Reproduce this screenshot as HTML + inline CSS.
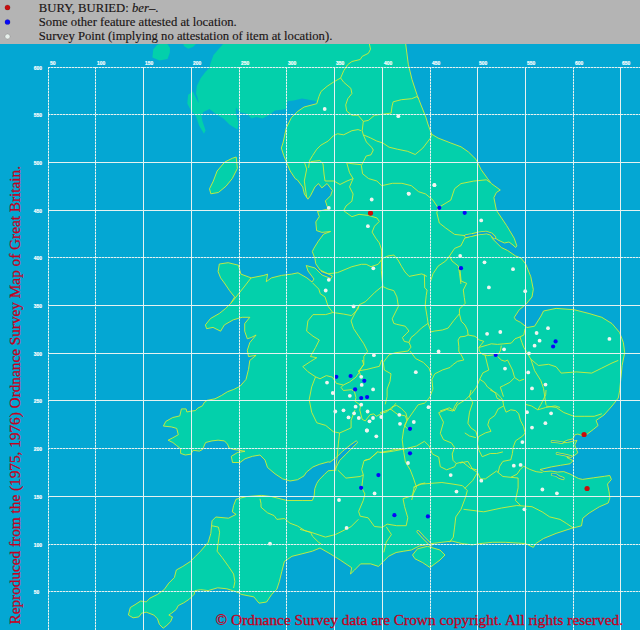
<!DOCTYPE html>
<html><head><meta charset="utf-8">
<style>
html,body{margin:0;padding:0;background:#04a7d3;}
body{width:640px;height:630px;overflow:hidden;position:relative;}
svg{position:absolute;left:0;top:0;display:block;}
.hdr{font-family:"Liberation Serif",serif;}
</style></head><body>
<svg width="640" height="630" viewBox="0 0 640 630">
<rect x="0" y="0" width="640" height="630" fill="#04a7d3"/>
<rect x="0" y="0" width="640" height="44" fill="#b4b4b4"/>
<g fill="#03d0ab">
<polygon points="152.4,57.5 153.2,49.5 157,45 159.5,44 167.5,44 170,48 169.8,52.7 167.5,59 159.5,60.6"/>
<polygon points="183.3,44 196,44 192.9,47.1 188.1,48.7 184.1,46.3"/>
</g>
<g fill="#03d0ab">
<polygon points="223,44 406.9,44 405.7,44 408.3,64.3 412,79.5 417,94.8 421,105 426,117.6 427.9,124 431.7,134.2 438,138 450.8,143 461,146.8 468.5,152 476.1,159.5 481.2,169.7 487.6,178.6 491.4,183.6 500.3,190 496.4,192.5 493.9,197.6 496.4,210.3 506.6,225.5 514.2,238.2 516.8,245.8 515.6,247.5 513,245 509,242 504.4,243 498,240 493,236.5 491.7,238 501.3,247.5 507.6,250.5 515.6,256 521,258 525.7,264 530.8,276.7 533.3,289.4 532,297 525.7,304.6 519.3,309.7 514.3,317.3 515.5,319.8 520.6,322.4 527,327.5 534.6,326.2 541,316 543.5,311 556.1,308.4 574,309.7 589.1,313.5 601.8,317.3 612,323.6 619.6,332.5 623.4,342.7 624.7,352.8 622.1,365.5 620.9,378.2 619.6,390.9 618.3,398 612,406 604,415 596,420.5 598.1,425.5 593.4,429.4 587.2,434.1 582.5,435.6 577.8,434.1 574.7,434.8 573.1,438.8 566.9,440.3 562.2,442.7 567.5,442.5 577,440.3 574.7,445 577.8,452.8 573.9,455.9 566.9,457.5 573.1,460.6 570,463.8 560.6,465.3 551.3,466.9 545,468.4 540,469.5 544.2,471.6 551,471 557.5,472 563.8,471.6 570,474 578.6,478.5 582.5,479.4 593.4,477.8 604.4,476.3 609.8,475.5 611.4,479.4 607.5,484.1 609.1,491.9 609.8,498.1 608.2,503 599.3,506.8 589.1,513.1 582.8,518.2 581.5,525.8 571.4,528.4 556.1,533.4 543.5,538.5 535.8,543.6 533.3,547.4 525.7,543.6 505.4,542.3 492.7,542.3 480,543.6 472.3,544.9 462.1,543.6 452,541.1 441.8,542.3 431.7,543.6 419,546.1 411.4,550 403.8,551.2 396.1,552.5 388.5,556.3 383.5,561.4 378.4,566.4 370.8,563.9 360.6,563.9 354.3,570.3 350.5,574 351.7,567.7 347.9,565.2 340.3,560.1 330.2,553.8 320,548 312.3,551.2 302.1,553.8 292,556.3 284.4,561.4 281.8,571.5 279.3,581.7 276.8,589.3 271.7,594.4 266.6,602 259,603.2 253.9,596.9 241.2,594.4 238.2,592.5 232.6,590.6 226.9,588.8 217.6,587.8 208.2,590.6 200.7,589.7 195,590.6 194.1,594.4 189.4,599.1 183.8,602.8 178.2,605.6 176.3,609.4 171.6,613.2 168.8,615 172.5,616.9 170.7,621.6 166.9,625.3 163.2,628.2 159.4,624.4 157.5,618.8 153.8,615 146.3,612.2 141.6,613.2 138.8,616.9 133.1,617.8 128.4,615 130.3,607.5 135,604.7 140.6,601 146.3,601.9 150,598.1 157.5,594.4 164.1,589.7 168.8,583.1 174.4,577.5 176.3,570 182.8,566.4 190.5,561.4 195.5,556.3 200.6,551.2 208.2,542.3 210.8,533.5 212,520.8 215.8,517 228.5,518.2 236.1,514.4 232.3,511.9 233.6,505.5 236.1,499.2 246.3,496.6 261.5,495.4 271.7,496.6 286.9,500.5 302.1,500.5 312.3,500.5 314.1,496.2 314.8,488.6 316.7,483.5 319.2,479.7 324.3,474.6 328.1,470.8 334.8,470.2 339.5,460.6 345.9,454.3 352.2,447.9 357.8,442.4 356.2,440.8 350.6,444.8 342.7,451.1 336.3,457.5 330,462.2 328.1,461.9 319.2,464.4 312.9,467 306.5,472.1 304,475.9 297.6,479.7 290,481 282.5,478.8 275,473.8 267.5,467.5 265,460 260,455 252.5,456.3 245,458.8 240,462.5 232.5,462.5 231.3,456.3 237.5,452.5 245,451.3 237.5,450 233.8,449.5 229.1,448 227.5,444.1 224.4,440.9 218.1,440.2 211.9,440.9 205.6,442.5 202.5,449.5 199.4,451.1 193.1,450.3 190.8,454.2 185.3,455 180.6,453.4 180.6,448.8 176.7,445.6 172.8,442.5 168.1,440.2 172.8,437.8 178.3,434.7 176.7,428.4 171.3,426.9 163.4,426.1 165.8,421.4 172.8,417.5 179.8,415.9 181.4,408.9 186.1,408.9 186.9,412 190,411.3 195.5,410.5 197.8,408.1 202.5,405.8 204.1,402.7 207.2,400.3 215,398.8 221.3,395.6 227.5,391.7 233.8,389.4 240,386.3 246,379.4 248.5,369.3 249.8,360.4 256.1,355.3 248.5,356.6 247.3,350.3 249.8,342.6 256.1,335 251.1,337.6 247.3,338.8 244.7,331.2 244.7,323.6 249.8,317.3 242.2,317.3 233.3,319.8 224.4,324.9 220.6,331.2 213,327.4 206.6,328.7 205.4,324.9 210.5,318.5 219.3,313.5 225.7,308.4 230.8,303.3 234.6,297 229.5,290.6 224.4,283 220.6,277.9 218.1,271.6 219.3,264 228.2,262.7 238.4,265.2 240.9,274.1 251.1,277.9 263.8,275.4 267.6,274.1 266.3,281.7 271.4,277.9 281.5,275.4 291.7,274.1 298,272.8 306.9,277.9 312,282 314,279 308,271 306.2,265.5 315,268 322,275 331,278.6 332.4,276 320,270 315.8,263.8 314.9,258.5 312.3,251.6 314,248.1 318.4,241.1 323.6,234.1 330.6,231.5 321.9,232.4 316.6,230.6 315.8,221.9 319.3,216.6 317.5,211.4 321.9,210.5 328.9,208.8 327.1,206.2 325.4,200.9 330.6,195.7 332.4,190.5 327.1,183.5 321.9,187.9 318.4,183.5 314.9,187 310.5,195.7 307.9,199.2 304.4,194 302.7,187 297.5,180 295.2,178.6 290.2,171 283.8,155.7 281.3,148 283,143 286.3,127.8 291.4,117.6 297.8,111.3 304.1,107 316.8,103.7 315.5,101.1 302.1,98.6 293.8,100.5 287.5,101.3 285.9,109.1 281.3,109.8 275,110.6 268.8,115.3 262.5,118.4 256.3,116.9 251.6,118.4 246.9,113.8 239.8,112.2 235.9,107.5 235.9,112.2 238.3,123.1 237.5,129.4 229.7,124.7 223.4,118.4 215.6,113.8 209.4,109.1 203.1,112.2 201.6,116.2 202.4,121 205.6,130.5 204,133.7 199.2,125.7 196,116.2 190.5,109.8 187.3,103.5 188.1,94.8 192.9,91.6 195,96 197.5,101 199,103 197,96 196,94 196.8,86 200.8,78.1 205.6,71.7 209.5,67.8 210.3,63.8 213.5,55.1 218.3,49.5"/>
<polygon points="236.2,157 237.4,168.4 232.3,178.5 226,186.2 218.4,192.5 210.8,193.8 209.5,188.8 213.3,181.1 217.1,171 224.7,162.1 232.3,158.3"/>
<polygon points="412.5,555 417.5,548.8 427.5,546.3 440,550 445,555 440,560 430,567.5 422.5,562.5 415,558.8"/>
</g>
<g fill="none" stroke="#d0ee38" stroke-width="0.9" stroke-linejoin="round">
<polyline points="405.7,44 408.3,64.3 412,79.5 417,94.8 421,105 426,117.6 427.9,124 431.7,134.2 438,138 450.8,143 461,146.8 468.5,152 476.1,159.5 481.2,169.7 487.6,178.6 491.4,183.6 500.3,190 496.4,192.5 493.9,197.6 496.4,210.3 506.6,225.5 514.2,238.2 516.8,245.8 515.6,247.5 513,245 509,242 504.4,243 498,240 493,236.5 491.7,238 501.3,247.5 507.6,250.5 515.6,256 521,258 525.7,264 530.8,276.7 533.3,289.4 532,297 525.7,304.6 519.3,309.7 514.3,317.3 515.5,319.8 520.6,322.4 527,327.5 534.6,326.2 541,316 543.5,311 556.1,308.4 574,309.7 589.1,313.5 601.8,317.3 612,323.6 619.6,332.5 623.4,342.7 624.7,352.8 622.1,365.5 620.9,378.2 619.6,390.9 618.3,398 612,406 604,415 596,420.5 598.1,425.5 593.4,429.4 587.2,434.1 582.5,435.6 577.8,434.1 574.7,434.8 573.1,438.8 566.9,440.3 562.2,442.7 567.5,442.5 577,440.3 574.7,445 577.8,452.8 573.9,455.9 566.9,457.5 573.1,460.6 570,463.8 560.6,465.3 551.3,466.9 545,468.4 540,469.5 544.2,471.6 551,471 557.5,472 563.8,471.6 570,474 578.6,478.5 582.5,479.4 593.4,477.8 604.4,476.3 609.8,475.5 611.4,479.4 607.5,484.1 609.1,491.9 609.8,498.1 608.2,503 599.3,506.8 589.1,513.1 582.8,518.2 581.5,525.8 571.4,528.4 556.1,533.4 543.5,538.5 535.8,543.6 533.3,547.4 525.7,543.6 505.4,542.3 492.7,542.3 480,543.6 472.3,544.9 462.1,543.6 452,541.1 441.8,542.3 431.7,543.6 419,546.1 411.4,550 403.8,551.2 396.1,552.5 388.5,556.3 383.5,561.4 378.4,566.4 370.8,563.9 360.6,563.9 354.3,570.3 350.5,574 351.7,567.7 347.9,565.2 340.3,560.1 330.2,553.8 320,548 312.3,551.2 302.1,553.8 292,556.3 284.4,561.4 281.8,571.5 279.3,581.7 276.8,589.3 271.7,594.4 266.6,602 259,603.2 253.9,596.9 241.2,594.4 238.2,592.5 232.6,590.6 226.9,588.8 217.6,587.8 208.2,590.6 200.7,589.7 195,590.6 194.1,594.4 189.4,599.1 183.8,602.8 178.2,605.6 176.3,609.4 171.6,613.2 168.8,615 172.5,616.9 170.7,621.6 166.9,625.3 163.2,628.2 159.4,624.4 157.5,618.8 153.8,615 146.3,612.2 141.6,613.2 138.8,616.9 133.1,617.8 128.4,615 130.3,607.5 135,604.7 140.6,601 146.3,601.9 150,598.1 157.5,594.4 164.1,589.7 168.8,583.1 174.4,577.5 176.3,570 182.8,566.4 190.5,561.4 195.5,556.3 200.6,551.2 208.2,542.3 210.8,533.5 212,520.8 215.8,517 228.5,518.2 236.1,514.4 232.3,511.9 233.6,505.5 236.1,499.2 246.3,496.6 261.5,495.4 271.7,496.6 286.9,500.5 302.1,500.5 312.3,500.5 314.1,496.2 314.8,488.6 316.7,483.5 319.2,479.7 324.3,474.6 328.1,470.8 334.8,470.2 339.5,460.6 345.9,454.3 352.2,447.9 357.8,442.4 356.2,440.8 350.6,444.8 342.7,451.1 336.3,457.5 330,462.2 328.1,461.9 319.2,464.4 312.9,467 306.5,472.1 304,475.9 297.6,479.7 290,481 282.5,478.8 275,473.8 267.5,467.5 265,460 260,455 252.5,456.3 245,458.8 240,462.5 232.5,462.5 231.3,456.3 237.5,452.5 245,451.3 237.5,450 233.8,449.5 229.1,448 227.5,444.1 224.4,440.9 218.1,440.2 211.9,440.9 205.6,442.5 202.5,449.5 199.4,451.1 193.1,450.3 190.8,454.2 185.3,455 180.6,453.4 180.6,448.8 176.7,445.6 172.8,442.5 168.1,440.2 172.8,437.8 178.3,434.7 176.7,428.4 171.3,426.9 163.4,426.1 165.8,421.4 172.8,417.5 179.8,415.9 181.4,408.9 186.1,408.9 186.9,412 190,411.3 195.5,410.5 197.8,408.1 202.5,405.8 204.1,402.7 207.2,400.3 215,398.8 221.3,395.6 227.5,391.7 233.8,389.4 240,386.3 246,379.4 248.5,369.3 249.8,360.4 256.1,355.3 248.5,356.6 247.3,350.3 249.8,342.6 256.1,335 251.1,337.6 247.3,338.8 244.7,331.2 244.7,323.6 249.8,317.3 242.2,317.3 233.3,319.8 224.4,324.9 220.6,331.2 213,327.4 206.6,328.7 205.4,324.9 210.5,318.5 219.3,313.5 225.7,308.4 230.8,303.3 234.6,297 229.5,290.6 224.4,283 220.6,277.9 218.1,271.6 219.3,264 228.2,262.7 238.4,265.2 240.9,274.1 251.1,277.9 263.8,275.4 267.6,274.1 266.3,281.7 271.4,277.9 281.5,275.4 291.7,274.1 298,272.8 306.9,277.9 312,282 314,279 308,271 306.2,265.5 315,268 322,275 331,278.6 332.4,276 320,270 315.8,263.8 314.9,258.5 312.3,251.6 314,248.1 318.4,241.1 323.6,234.1 330.6,231.5 321.9,232.4 316.6,230.6 315.8,221.9 319.3,216.6 317.5,211.4 321.9,210.5 328.9,208.8 327.1,206.2 325.4,200.9 330.6,195.7 332.4,190.5 327.1,183.5 321.9,187.9 318.4,183.5 314.9,187 310.5,195.7 307.9,199.2 304.4,194 302.7,187 297.5,180 295.2,178.6 290.2,171 283.8,155.7 281.3,148 283,143 286.3,127.8 291.4,117.6 297.8,111.3 304.1,107 316.8,103.7"/>
<polygon points="236.2,157 237.4,168.4 232.3,178.5 226,186.2 218.4,192.5 210.8,193.8 209.5,188.8 213.3,181.1 217.1,171 224.7,162.1 232.3,158.3"/>
<polygon points="412.5,555 417.5,548.8 427.5,546.3 440,550 445,555 440,560 430,567.5 422.5,562.5 415,558.8"/>
<polyline points="369.4,44 370.5,49.2 368.4,53.3 362.2,56.4 360.2,59.5 351.9,61.5 347.8,64.6 343.7,70.8 340.6,78 333.3,82.2 327.1,86.3 321,91.5 318.9,96.6 316.8,103.7"/><polyline points="340.6,78 343.7,82.2 350.9,88.4 351.9,93.5 347.8,98.7 345.7,104.9 346.7,111.1 351.9,115.2 358.1,115.2 363.3,121.4 362.2,130.7 363.3,134.8"/><polyline points="363.3,121.4 368.4,120.4 374.6,115.2 382.9,114.2 391.1,113.1 392.1,105.9 393.2,101.8 401.4,99.7 411.7,98.7 416.9,96.6 419,99"/><polyline points="363.3,134.8 370.5,137.9 376.7,141 382.9,143 389.1,147.2 397.3,149.2 407.6,151.3 415.2,154.5 422.8,148.1 430.5,138 431.7,134.2"/><polyline points="361.2,130.7 358.1,129.6 351.9,130.7 343.7,134.8 337.5,133.8 333.3,135.8 328.2,141 321,145.1 316.8,149.2 312.7,155.4 309.6,160.6 308.6,167.8"/><polyline points="363.3,134.8 366.4,142 371.5,147.2 373.3,150 371,154.8 366.2,156 363.8,160.7 361.4,165.5 362.6,173.8 368.6,178.6 376.9,181 381.7,185.7"/><polyline points="346.7,162.7 349.5,172.6 353.1,178.6 349.5,186.9 353.1,194 351.9,201.2 346,206 343.6,210.7 351.9,216.7 359,214.3 368.6,215.5 376.9,217.9 379.3,221.4 374.5,226.2 372.1,232.1 375.7,238.1 379.3,242.9 381.7,250 381.7,259.5 378.1,264.3 371,266.7 366.2,264.3 361.4,264.3 351.9,266.7 337.6,272.6 328.1,273.8 321,271.4"/><polyline points="346.7,162.7 351.9,163.7 361.2,164.7"/><polyline points="310.6,161.6 319.9,160.6 323,163.7 324,174 325,181 334,181 340,184.5 347,181 353.1,178.6"/><polyline points="304.3,161.9 306.7,169 304.3,181 306.7,197.6"/><polyline points="381.7,185.7 392.4,183.3 401.9,183.3 411.4,185.7 418.6,191.7 425.7,194 432.9,200 438.1,207.8"/><polyline points="438.1,207.8 450.8,200.1 454.6,188.7 461,183.6 473.6,181.1 486.3,179.8 490.1,182.4"/><polyline points="438.1,207.8 436.8,212.8 439.3,223 445.7,228 454.6,234.4 466,235.7 472.3,234.4"/><polyline points="472.3,235.7 464.7,238.2 460.9,245.8 454.6,248.4 449.5,256 445.7,261 438.1,266.1 433,273.7 430.5,281.4"/><polyline points="449.5,256 452,261 458.4,266.1 459.6,273.7 460.9,284"/><polyline points="381.7,258.7 388,256 393.9,255 398,260 401.5,266.3 405,272 409.1,276.4 416,275 421.8,273.9 426.9,276.4"/><polyline points="312.5,282.8 318.8,289.1 320.3,293.8 325,296.9 328.1,306.3 332.8,312.5 343.8,314.1 351.6,315.6 357.8,309.4 359.4,304.7"/><polyline points="381.7,259.5 381.3,270.3 382.8,285.9 375,292.2 365.6,301.6 359.4,304.7 356.2,310.8"/><polyline points="356.2,310.8 351.1,320.9 353.6,328.6 358.7,336.2 363.8,343.8 367.6,351.4 363.8,356.5 363.8,364.1 358.7,371.7"/><polyline points="332.8,312.5 325.7,314.6 313,314.6 307.9,320.9 306.6,331.1 313,336.2 319.3,340 315.5,347.6 310.5,356.5 316.8,357.7 310.5,361.5 302.8,366.6 307.9,371.7 315.5,376.8 311.7,386.9 309.2,399.6 311.7,412.3 316.8,422.8 325.7,425.4 333.3,431.7 339.6,433 338.4,443.1 337.1,458.4 335.8,466 335.8,471.1"/><polyline points="315.5,376.8 320,378.8 326.3,375.6 332.5,377.2 336.4,383.4 343.4,385 349.7,381.9 355.9,377.2 359.1,372.5 358.3,370.9 366.9,369.4 373.1,367.8 379.4,366.3 381.7,360"/><polyline points="343.4,385 341.1,387.3 343.4,390.5 351.3,389.7 354.4,391.3 355.9,397.5 355.2,401.4 360.6,405.3 359.8,410 362.2,419.4 365.3,420.9 370,414.7 373.9,413.9 376.3,416.3 382.5,413.1 387.2,411.6 391.9,406.9 396.6,405.3 401.3,408.4 405.9,413.1 407.5,419.4 404.4,425.6 407.5,428.8"/><polyline points="362.2,360 363.8,364.7 359.1,370.9 360.6,375.6"/><polyline points="457.8,401.6 454.6,406.3 453,411.1 446.7,409.5 438.7,412.7 440.3,415.9 443.5,422.2 440.3,433.3 443.5,439.7 451.4,442.9 454.6,447.6 452.2,454 453,460.3 456.2,463.5 462.5,461.9 470.5,468.3 476.8,469.8"/><polyline points="463.5,509.3 483.8,511.8 501.5,508 516.8,505.5 532,506.7 542.1,511.8 549.7,516.9 560,519.4 566.3,523.3 573.9,528.4"/><polyline points="465.7,496.8 461,509.3 455.8,516.9 454.6,527.1 453.3,537.2 449.5,542.3"/><polyline points="413.3,487.3 421.3,484.1 441.9,482.5 453,484.1 462.5,485.7 467.3,490.5 465.7,496.8"/><polyline points="403.8,449.2 416.5,446 424.4,441.3 429.2,446 432.4,454 438.7,457.1 440.3,466.7 446.7,469.8 454.6,466.7 456.2,463.5"/><polyline points="339.6,433 351.1,427.9 351.1,420.3 355,410"/><polyline points="391.1,409.5 397.5,414.3 405.4,415.9 407,420.6"/><polyline points="380,452.4 389.5,450.8 395.9,449.2 403.8,449.2"/><polyline points="380,412.7 389.5,409.5 391.1,409.5 395.9,403.2"/><polyline points="337.9,470.2 345.9,478.1 360.2,476.5 363.3,474.9"/><polyline points="364.1,460.6 369.7,459 377.6,451.9 382.4,452.7 393.5,451.1 401.4,449.5 403.8,449.2"/><polyline points="377.6,451.9 369.7,459 364.1,460.6 361.7,469.4 363.3,474.9 361.7,487.6 364.9,494 363.3,500.3 358.6,511.4 360.2,516.2 368.1,517.8 374.4,526.5 382.4,527.3 387.1,524.1 396.7,525.7 406.2,525.7 407.8,517.8 404.6,506.7 403,498.7 412.5,495.6 414.1,487.6 418.9,484.4 425.2,482.9"/><polyline points="300,529.4 310.2,532 325.4,537.1 335.5,534.5 350.8,526.9 358.4,519.3"/><polyline points="386.3,526.9 391.4,534.5 386.3,542.1 383.8,552.3"/><polyline points="260,498.8 261,503.5 261,507.2 267.5,512.8 274.1,515.6 276.9,519.4 284.4,518.5 290,523.2 297.5,526 305,530.7 310.7,532.5 312.5,536.3 318.2,541.9 321.9,544.7"/><polyline points="212,525.8 218.4,527.1 219.6,532.2 217.1,551.2 222.2,557.6 228.5,566.4 233.6,574 234.9,581.7 233.6,588"/><polyline points="530.8,359.2 534.6,370.6 540.9,380.7 543.5,388.4 546,404.9"/><polyline points="546,406.1 556.1,407.4 563.8,412.5 573.9,416.3 584.1,416.3 594.2,416.3 601.8,413.8"/><polyline points="251.1,277.9 244,287 236,297 230.8,303.3"/><polyline points="382.8,286.5 388,289 393.8,290.6 396.9,296.9 398.4,306.3 392.2,318.8 393.8,323.4 396.7,324.3 405.2,326.2 409,331 406.2,333.8 402.4,337.6 404.3,341.4 409,342.4 411,347.1 408.1,351 394.8,352.9 389,354.8 383.3,362.4 384.3,370 391,373.8 390,381.4 387.1,389 387.1,396.7 385.2,404.3"/><polyline points="424.4,274.5 424.7,287.9 427.1,290 426.2,295.7 425.2,305.2 427.1,316.7 428.1,323.3 421.4,328.1 415.7,333.8 411,337.6 409,342.4"/><polyline points="460,270 461.1,281.1 466.7,283.3 463.3,290 464.3,297.6 465.2,303.3 459.5,309 459.4,313.8 453.8,320.5 448.1,328.1 442.4,330 434.8,331 431,331.9 428.1,323.3"/><polyline points="459.4,313.8 461.3,321.3 465,325 467.5,330 468.1,335 465,336.3 460,336.9 458.1,340 458.8,346.3 458.8,351.3 461.3,355 463.8,360 457.5,361.3 452.5,365 450,367.5 442.4,370 434.8,373.8 431.9,379.5 432.9,389 430,396.7 427.6,400 424.4,403.2 418.1,404.8 407,420.6 403.8,428.6 402.2,439.7 403.8,452.4 405.4,461.9 410.2,469.8 413.3,477.8 416.5,487.3 413.3,493.7 411.7,500"/><polyline points="468.1,335 475,336.3 479.4,340 483.8,341.3 481.3,344.4 478.8,347.5 479.4,351.3 482.5,354.4 487.5,355.6 492.5,355 495.6,355 498.8,353.8 500.6,350 501.3,345.6"/><polyline points="478.8,347.5 487.5,345 491.3,343.8 497.5,344.4 503.8,343.8 511.3,343.1 515,338.8 520,336.9 523.8,335 525,328.8"/><polyline points="520,336.9 521.9,342.5 523.8,347.5 526.3,351.3 530.8,359.2 538.4,365.5 548.5,364.3 556.1,366.8 561.2,373.1 576.4,371.9 591.7,373.1 601.8,368.1 612,363 618.3,360.4"/><polyline points="485,355 486.3,360 487.5,365 488.8,370 482.9,372.9 479.7,379.2 484.4,382.4 487.6,387.1 492.4,390.3 495.6,393.5 497.1,398.3 500.3,399.8 503.5,401.4"/><polyline points="497.5,356.3 501.3,360 505,361.3 507.5,360 510,365 512.5,370 514.6,377.6 519.4,380.8 524.1,379.2"/><polyline points="514.6,377.6 509.8,382.4 503.5,385.6 500.3,387.1 501.9,391.9 503.5,396.7"/><polyline points="440,411 449.5,407.8 454.3,411 457.5,404.6 465.4,399.8 471.7,393.5 476.5,387.1 479.7,379.2"/><polyline points="410,351 415.7,358.6 423.3,362.4 429,368.1 431.9,375.7"/><polyline points="490.2,390 496.5,393.2 501.3,397.9 502.9,401.1 503.7,405.9 506,412.2 510.8,409.8 515.6,410.6 518.7,413.8 520.3,420.2 523.5,426.5 525.1,432.9 522.7,436 515.6,440.8 513.2,447.1 512.4,453.5 510.8,459.8 502.9,461.4 499.7,466.2 498.1,472.5 502.9,476.5 510.8,477.3 517.1,474.1 520.3,469.4 523.5,466.2 529.8,469.4 536.2,471.7 542.5,472.5"/><polyline points="503.7,405.9 498.1,409 494.9,415.4 489.4,419.4 487.8,424.9 491,431.3 485.4,432.9 478.3,436.8 477.5,444 479,450.3 482.2,456.7 490.2,453.5 496.5,453.5 502.9,451.9"/><polyline points="471.1,390 469.5,396.3 472.7,402.7 469.5,412.2 467.9,423.3 471.1,428.1 475.9,431.3 477.5,437.6"/><polyline points="464.8,432.9 469.5,436 475.9,437.6"/><polyline points="460,463 467.9,461.4 472.7,469.4 477.5,472.5 480.6,478.9 485.4,478.9 496.5,471 498.1,472.5"/><polyline points="477.5,472.5 472.7,480.5 464.8,488.4"/><polyline points="525.1,404.3 531.4,405.9 537.8,409.8 541,404.3 544.1,397.9 545.7,394.8 546,390"/><polyline points="537.8,409.8 545.7,407.5 555.2,405.9 560,407.5"/><polyline points="510.8,477.3 518.1,478 518.1,487.8 515.5,500.5 520.6,505.5"/>
</g>
<g stroke="none">
<circle cx="434.3" cy="184.9" r="1.9" fill="#f0f4f0"/><circle cx="408.9" cy="193.8" r="1.9" fill="#f0f4f0"/><circle cx="481.2" cy="220.4" r="1.9" fill="#f0f4f0"/><circle cx="460.2" cy="256" r="1.9" fill="#f0f4f0"/><circle cx="484.5" cy="262.3" r="1.9" fill="#f0f4f0"/><circle cx="513" cy="269.2" r="1.9" fill="#f0f4f0"/><circle cx="488.9" cy="287.4" r="1.9" fill="#f0f4f0"/><circle cx="525.2" cy="291.2" r="1.9" fill="#f0f4f0"/><circle cx="548" cy="328.2" r="1.9" fill="#f0f4f0"/><circle cx="487.1" cy="333.8" r="1.9" fill="#f0f4f0"/><circle cx="500.3" cy="332" r="1.9" fill="#f0f4f0"/><circle cx="536.6" cy="333" r="1.9" fill="#f0f4f0"/><circle cx="539.6" cy="340.7" r="1.9" fill="#f0f4f0"/><circle cx="534.6" cy="345.7" r="1.9" fill="#f0f4f0"/><circle cx="504.1" cy="349.3" r="1.9" fill="#f0f4f0"/><circle cx="529" cy="353.3" r="1.9" fill="#f0f4f0"/><circle cx="609.4" cy="338.9" r="1.9" fill="#f0f4f0"/><circle cx="505" cy="368.6" r="1.9" fill="#f0f4f0"/><circle cx="528.2" cy="372.4" r="1.9" fill="#f0f4f0"/><circle cx="545.5" cy="384.6" r="1.9" fill="#f0f4f0"/><circle cx="532" cy="388.4" r="1.9" fill="#f0f4f0"/><circle cx="527" cy="412.2" r="1.9" fill="#f0f4f0"/><circle cx="551.1" cy="413.3" r="1.9" fill="#f0f4f0"/><circle cx="545.4" cy="423.2" r="1.9" fill="#f0f4f0"/><circle cx="532" cy="427.6" r="1.9" fill="#f0f4f0"/><circle cx="522.4" cy="442.1" r="1.9" fill="#f0f4f0"/><circle cx="513.8" cy="465.7" r="1.9" fill="#f0f4f0"/><circle cx="520.6" cy="464.9" r="1.9" fill="#f0f4f0"/><circle cx="481.3" cy="480.7" r="1.9" fill="#f0f4f0"/><circle cx="542.4" cy="489.5" r="1.9" fill="#f0f4f0"/><circle cx="556.9" cy="493.3" r="1.9" fill="#f0f4f0"/><circle cx="524.4" cy="509.3" r="1.9" fill="#f0f4f0"/><circle cx="371.7" cy="199.5" r="1.9" fill="#f0f4f0"/><circle cx="367.9" cy="226.2" r="1.9" fill="#f0f4f0"/><circle cx="408.6" cy="193.6" r="1.9" fill="#f0f4f0"/><circle cx="434.5" cy="185.2" r="1.9" fill="#f0f4f0"/><circle cx="328.8" cy="207.9" r="1.9" fill="#f0f4f0"/><circle cx="373.3" cy="268.3" r="1.9" fill="#f0f4f0"/><circle cx="328.8" cy="279.8" r="1.9" fill="#f0f4f0"/><circle cx="325.7" cy="290.5" r="1.9" fill="#f0f4f0"/><circle cx="324.7" cy="109" r="1.9" fill="#f0f4f0"/><circle cx="398.3" cy="116.2" r="1.9" fill="#f0f4f0"/><circle cx="353.6" cy="306.4" r="1.9" fill="#f0f4f0"/><circle cx="373.9" cy="355.2" r="1.9" fill="#f0f4f0"/><circle cx="415.8" cy="372.2" r="1.9" fill="#f0f4f0"/><circle cx="438.6" cy="351.4" r="1.9" fill="#f0f4f0"/><circle cx="361.2" cy="376.8" r="1.9" fill="#f0f4f0"/><circle cx="361.7" cy="384.9" r="1.9" fill="#f0f4f0"/><circle cx="327" cy="382.6" r="1.9" fill="#f0f4f0"/><circle cx="332.8" cy="393" r="1.9" fill="#f0f4f0"/><circle cx="373.1" cy="389.4" r="1.9" fill="#f0f4f0"/><circle cx="349.8" cy="395.8" r="1.9" fill="#f0f4f0"/><circle cx="361.2" cy="404.7" r="1.9" fill="#f0f4f0"/><circle cx="355.6" cy="406.7" r="1.9" fill="#f0f4f0"/><circle cx="343.5" cy="410.3" r="1.9" fill="#f0f4f0"/><circle cx="335.3" cy="411.5" r="1.9" fill="#f0f4f0"/><circle cx="354.1" cy="413.3" r="1.9" fill="#f0f4f0"/><circle cx="367.6" cy="411.5" r="1.9" fill="#f0f4f0"/><circle cx="348.5" cy="417.4" r="1.9" fill="#f0f4f0"/><circle cx="399.3" cy="414.8" r="1.9" fill="#f0f4f0"/><circle cx="428.5" cy="407.2" r="1.9" fill="#f0f4f0"/><circle cx="374.6" cy="493.4" r="1.9" fill="#f0f4f0"/><circle cx="339" cy="500" r="1.9" fill="#f0f4f0"/><circle cx="346.6" cy="527.9" r="1.9" fill="#f0f4f0"/><circle cx="450.7" cy="475.1" r="1.9" fill="#f0f4f0"/><circle cx="456.5" cy="491.6" r="1.9" fill="#f0f4f0"/><circle cx="366.8" cy="430.5" r="1.9" fill="#f0f4f0"/><circle cx="358.8" cy="418" r="1.9" fill="#f0f4f0"/><circle cx="369.5" cy="421.3" r="1.9" fill="#f0f4f0"/><circle cx="373" cy="418" r="1.9" fill="#f0f4f0"/><circle cx="381.3" cy="417" r="1.9" fill="#f0f4f0"/><circle cx="367" cy="430.5" r="1.9" fill="#f0f4f0"/><circle cx="376.3" cy="436.3" r="1.9" fill="#f0f4f0"/><circle cx="400" cy="423.8" r="1.9" fill="#f0f4f0"/><circle cx="413.8" cy="422" r="1.9" fill="#f0f4f0"/><circle cx="408" cy="463" r="1.9" fill="#f0f4f0"/><circle cx="270" cy="543.7" r="1.9" fill="#f0f4f0"/><circle cx="439.3" cy="207.8" r="2.1" fill="#0808f8"/><circle cx="464.7" cy="212.8" r="2.1" fill="#0808f8"/><circle cx="461" cy="268.2" r="2.1" fill="#0808f8"/><circle cx="555.6" cy="341.4" r="2.1" fill="#0808f8"/><circle cx="553.1" cy="346.5" r="2.1" fill="#0808f8"/><circle cx="495.7" cy="354.9" r="2.1" fill="#0808f8"/><circle cx="336.3" cy="376.8" r="2.1" fill="#0808f8"/><circle cx="350.6" cy="376" r="2.1" fill="#0808f8"/><circle cx="364.3" cy="380.8" r="2.1" fill="#0808f8"/><circle cx="355.1" cy="389.4" r="2.1" fill="#0808f8"/><circle cx="361.2" cy="398.1" r="2.1" fill="#0808f8"/><circle cx="367.1" cy="397.1" r="2.1" fill="#0808f8"/><circle cx="378.4" cy="475.1" r="2.1" fill="#0808f8"/><circle cx="361.1" cy="487.8" r="2.1" fill="#0808f8"/><circle cx="394.4" cy="515.2" r="2.1" fill="#0808f8"/><circle cx="427.9" cy="516.4" r="2.1" fill="#0808f8"/><circle cx="410" cy="428.8" r="2.1" fill="#0808f8"/><circle cx="410" cy="453.3" r="2.1" fill="#0808f8"/><circle cx="370.5" cy="213.1" r="2.6" fill="#c80c0c"/><circle cx="584.1" cy="434.5" r="2.6" fill="#c80c0c"/><circle cx="587.1" cy="488.5" r="2.6" fill="#c80c0c"/>
</g>
<g fill="none" stroke-linejoin="round" stroke-linecap="round">
<polyline points="466,236 472,235 478,233.5 486.3,232.5 491,234 494.5,237.5" stroke="#d0ee38" stroke-width="3.4"/>
<polyline points="466,236 472,235 478,233.5 486.3,232.5 491,234 494.5,237.5" stroke="#04a7d3" stroke-width="1.8"/>
<polyline points="552,441.5 558,442 562.2,442.7" stroke="#d0ee38" stroke-width="2.6"/>
<polyline points="552,441.5 558,442 562.2,442.7" stroke="#04a7d3" stroke-width="1.2"/>
<polyline points="557,453.5 565,455 571,456.5" stroke="#d0ee38" stroke-width="2.6"/>
<polyline points="557,453.5 565,455 571,456.5" stroke="#04a7d3" stroke-width="1.2"/>
<polyline points="418,531.5 423,537 428,542 431,545" stroke="#d0ee38" stroke-width="3"/>
<polyline points="418,531.5 423,537 428,542 431,545" stroke="#04a7d3" stroke-width="1.5"/>
<polyline points="552.5,474.5 556,475 559,477 563,478.5" stroke="#d0ee38" stroke-width="3.2"/>
<polyline points="552.5,474.5 556,475 559,477 563,478.5" stroke="#04a7d3" stroke-width="1.8"/>
</g>
<g stroke="#e6f2f0" stroke-width="1" shape-rendering="crispEdges">
<line x1="48.5" y1="67" x2="48.5" y2="630" stroke-opacity="0.45"/><line x1="48.5" y1="67" x2="48.5" y2="630" stroke-dasharray="2 1"/><line x1="95.5" y1="67" x2="95.5" y2="630" stroke-opacity="0.45"/><line x1="95.5" y1="67" x2="95.5" y2="630" stroke-dasharray="2 1"/><line x1="143.5" y1="67" x2="143.5" y2="630"/><line x1="191.5" y1="67" x2="191.5" y2="630"/><line x1="239.5" y1="67" x2="239.5" y2="630" stroke-opacity="0.45"/><line x1="239.5" y1="67" x2="239.5" y2="630" stroke-dasharray="2 1"/><line x1="286.5" y1="67" x2="286.5" y2="630" stroke-opacity="0.45"/><line x1="286.5" y1="67" x2="286.5" y2="630" stroke-dasharray="2 1"/><line x1="334.5" y1="67" x2="334.5" y2="630"/><line x1="382.5" y1="67" x2="382.5" y2="630"/><line x1="430.5" y1="67" x2="430.5" y2="630" stroke-opacity="0.45"/><line x1="430.5" y1="67" x2="430.5" y2="630" stroke-dasharray="2 1"/><line x1="477.5" y1="67" x2="477.5" y2="630"/><line x1="525.5" y1="67" x2="525.5" y2="630"/><line x1="573.5" y1="67" x2="573.5" y2="630" stroke-opacity="0.45"/><line x1="573.5" y1="67" x2="573.5" y2="630" stroke-dasharray="2 1"/><line x1="620.5" y1="67" x2="620.5" y2="630"/><line x1="48" y1="67.5" x2="640" y2="67.5" stroke-opacity="0.45"/><line x1="48" y1="67.5" x2="640" y2="67.5" stroke-dasharray="2 1"/><line x1="48" y1="114.5" x2="640" y2="114.5" stroke-opacity="0.45"/><line x1="48" y1="114.5" x2="640" y2="114.5" stroke-dasharray="2 1"/><line x1="48" y1="162.5" x2="640" y2="162.5"/><line x1="48" y1="210.5" x2="640" y2="210.5"/><line x1="48" y1="257.5" x2="640" y2="257.5" stroke-opacity="0.45"/><line x1="48" y1="257.5" x2="640" y2="257.5" stroke-dasharray="2 1"/><line x1="48" y1="305.5" x2="640" y2="305.5"/><line x1="48" y1="353.5" x2="640" y2="353.5"/><line x1="48" y1="400.5" x2="640" y2="400.5"/><line x1="48" y1="448.5" x2="640" y2="448.5" stroke-opacity="0.45"/><line x1="48" y1="448.5" x2="640" y2="448.5" stroke-dasharray="2 1"/><line x1="48" y1="496.5" x2="640" y2="496.5"/><line x1="48" y1="544.5" x2="640" y2="544.5" stroke-opacity="0.45"/><line x1="48" y1="544.5" x2="640" y2="544.5" stroke-dasharray="2 1"/><line x1="48" y1="591.5" x2="640" y2="591.5" stroke-opacity="0.45"/><line x1="48" y1="591.5" x2="640" y2="591.5" stroke-dasharray="2 1"/>
</g>
<g fill="#ffffff" stroke="#ffffff" stroke-width="0.2" font-family="Liberation Sans, sans-serif" font-size="6" font-weight="bold">
<text x="50" y="64.8" textLength="5.6" lengthAdjust="spacingAndGlyphs">50</text><text x="97" y="64.8" textLength="8.2" lengthAdjust="spacingAndGlyphs">100</text><text x="145" y="64.8" textLength="8.2" lengthAdjust="spacingAndGlyphs">150</text><text x="193" y="64.8" textLength="8.2" lengthAdjust="spacingAndGlyphs">200</text><text x="241" y="64.8" textLength="8.2" lengthAdjust="spacingAndGlyphs">250</text><text x="288" y="64.8" textLength="8.2" lengthAdjust="spacingAndGlyphs">300</text><text x="336" y="64.8" textLength="8.2" lengthAdjust="spacingAndGlyphs">350</text><text x="384" y="64.8" textLength="8.2" lengthAdjust="spacingAndGlyphs">400</text><text x="432" y="64.8" textLength="8.2" lengthAdjust="spacingAndGlyphs">450</text><text x="479" y="64.8" textLength="8.2" lengthAdjust="spacingAndGlyphs">500</text><text x="527" y="64.8" textLength="8.2" lengthAdjust="spacingAndGlyphs">550</text><text x="575" y="64.8" textLength="8.2" lengthAdjust="spacingAndGlyphs">600</text><text x="622" y="64.8" textLength="8.2" lengthAdjust="spacingAndGlyphs">650</text><text x="33.8" y="69.5" textLength="8.2" lengthAdjust="spacingAndGlyphs">600</text><text x="33.8" y="116.5" textLength="8.2" lengthAdjust="spacingAndGlyphs">550</text><text x="33.8" y="164.5" textLength="8.2" lengthAdjust="spacingAndGlyphs">500</text><text x="33.8" y="212.5" textLength="8.2" lengthAdjust="spacingAndGlyphs">450</text><text x="33.8" y="259.5" textLength="8.2" lengthAdjust="spacingAndGlyphs">400</text><text x="33.8" y="307.5" textLength="8.2" lengthAdjust="spacingAndGlyphs">350</text><text x="33.8" y="355.5" textLength="8.2" lengthAdjust="spacingAndGlyphs">300</text><text x="33.8" y="402.5" textLength="8.2" lengthAdjust="spacingAndGlyphs">250</text><text x="33.8" y="450.5" textLength="8.2" lengthAdjust="spacingAndGlyphs">200</text><text x="33.8" y="498.5" textLength="8.2" lengthAdjust="spacingAndGlyphs">150</text><text x="33.8" y="546.5" textLength="8.2" lengthAdjust="spacingAndGlyphs">100</text><text x="33.8" y="593.5" textLength="5.4" lengthAdjust="spacingAndGlyphs">50</text>
</g>
<g class="hdr" font-size="12.7" fill="#1a1414" stroke="#1a1414" stroke-width="0.15">
<circle cx="7.5" cy="7.5" r="2.6" fill="#c80c0c"/>
<circle cx="7.5" cy="22" r="2.6" fill="#0808f8"/>
<circle cx="7.5" cy="36.5" r="2.5" fill="#e8f0ec"/>
<text x="38.8" y="11.5">BURY, BURIED: <tspan font-style="italic">ber–</tspan>.</text>
<text x="38.8" y="25.8">Some other feature attested at location.</text>
<text x="38.8" y="40">Survey Point (implying no attestation of item at location).</text>
</g>
<g font-family="Liberation Serif, serif" fill="#c4001e" stroke="#c4001e" stroke-width="0.3">
<text x="215.6" y="624.7" font-size="15.5" textLength="407.5" lengthAdjust="spacingAndGlyphs">© Ordnance Survey data are Crown copyright. All rights reserved.</text>
<text transform="translate(19.6,624.5) rotate(-90)" font-size="15.5" textLength="458.5" lengthAdjust="spacingAndGlyphs">Reproduced from the (1975, 1976) Ordnance Survey Map of Great Britain.</text>
</g>
</svg>
</body></html>
